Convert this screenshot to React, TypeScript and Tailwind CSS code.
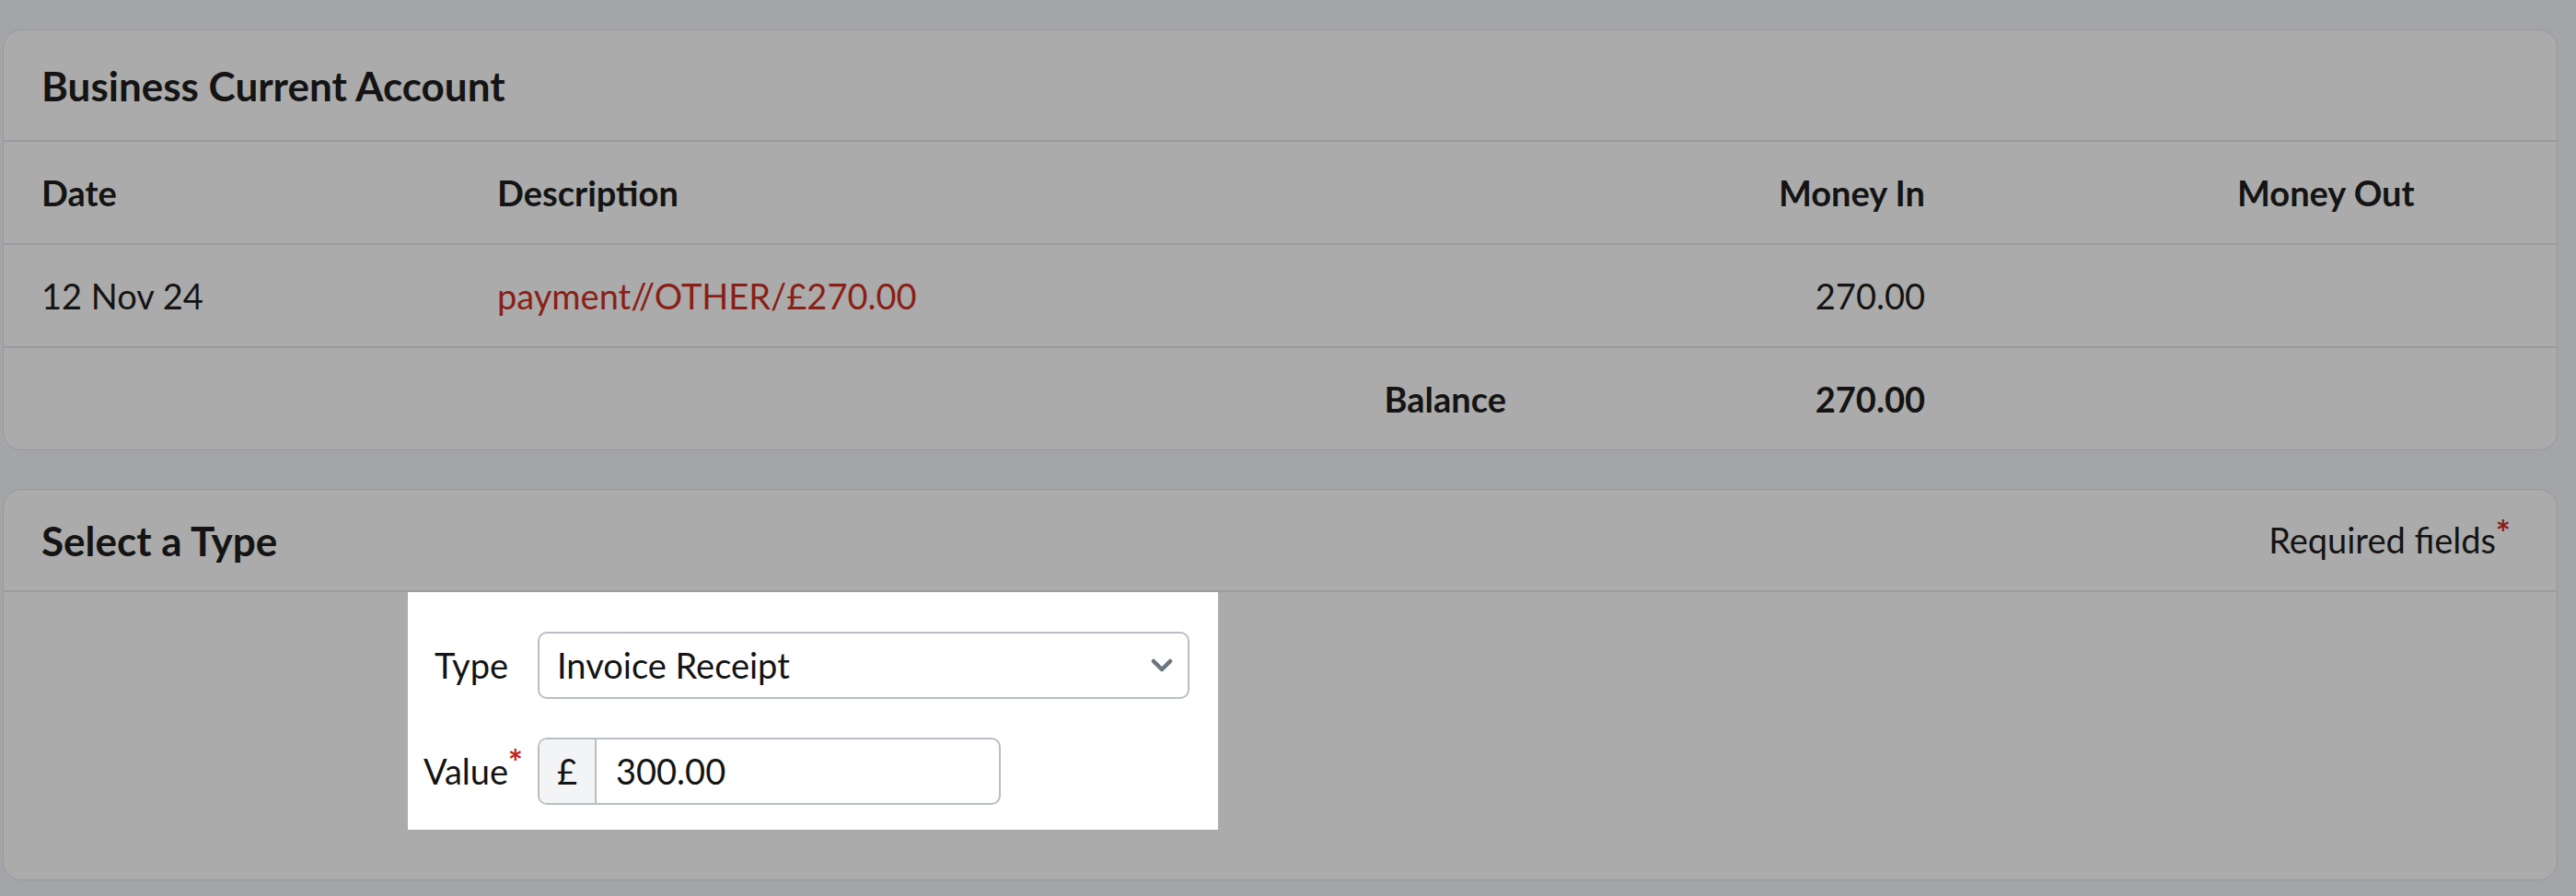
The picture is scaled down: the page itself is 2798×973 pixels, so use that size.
import React from "react";

const rowClass =
  "grid grid-cols-[494px_1180px_455px_1fr] items-center text-[38px] text-[#141414]";

export default function App() {
  return (
    <div
      className="min-h-screen bg-[#a3a5a9] pt-[32px] pl-[3px] pr-[20px] pb-[17px]"
      style={{ fontFamily: "Lato, 'Noto Sans', sans-serif" }}
    >
      <div className="rounded-[20px] border border-[#97989c] bg-[#ababab]">
        <div className="flex h-[121px] items-center border-b-2 border-[#9a9b9f] pl-[41px]">
          <h2 className="text-[44px] font-bold text-[#141414]">Business Current Account</h2>
        </div>
        <div className={rowClass + " h-[112px] border-b-2 border-[#9a9b9f] font-bold"}>
          <div className="pl-[41px]">Date</div>
          <div className="pl-[42px]">Description</div>
          <div className="pr-[42px] text-right">Money In</div>
          <div className="pl-[297px]">Money Out</div>
        </div>
        <div className={rowClass + " h-[112px] border-b-2 border-[#9a9b9f]"}>
          <div className="pl-[41px]">12 Nov 24</div>
          <div className="pl-[42px] text-[#8a1f17]">payment//OTHER/£270.00</div>
          <div className="pr-[42px] text-right">270.00</div>
          <div></div>
        </div>
        <div className={rowClass + " h-[110px] font-bold"}>
          <div></div>
          <div className="pr-[42px] text-right">Balance</div>
          <div className="pr-[42px] text-right">270.00</div>
          <div></div>
        </div>
      </div>

      <div className="mt-[42px] rounded-[20px] border border-[#97989c] bg-[#ababab]">
        <div className="flex h-[111px] items-center justify-between border-b-2 border-[#9a9b9f] pl-[41px] pr-[50px]">
          <h2 className="text-[44px] font-bold text-[#141414]">Select a Type</h2>
          <div className="relative pr-[16px] text-[38px] text-[#141414]">
            Required fields
            <span className="absolute right-0 -top-[8px] text-[38px] font-bold text-[#8a1f17]">*</span>
          </div>
        </div>
        <div className="pl-[439px] pb-[54px]">
          <div className="w-[880px] bg-white pt-[43px] pb-[27px] pr-[31px]">
            <div className="flex items-center">
              <label className="w-[125px] pr-[16px] text-right text-[38px] text-[#141414]">Type</label>
              <div className="ml-[16px] flex h-[73px] flex-1 items-center justify-between rounded-[10px] border-2 border-[#b8bec3] bg-white pl-[19px] pr-[15px] text-[38px] text-[#141414]">
                <span>Invoice Receipt</span>
                <svg width="26" height="18" viewBox="0 0 26 18" fill="none">
                  <path d="M4 4l9 9 9-9" stroke="#6b7680" strokeWidth="4.5" strokeLinecap="round" strokeLinejoin="round" />
                </svg>
              </div>
            </div>
            <div className="mt-[42px] flex items-center">
              <label className="relative w-[125px] pr-[16px] text-right text-[38px] text-[#141414]">
                Value
                <span className="absolute right-0 -top-[10px] text-[38px] font-bold text-[#c4221b]">*</span>
              </label>
              <div className="ml-[16px] flex h-[73px] w-[503px] overflow-hidden rounded-[10px] border-2 border-[#b8bec3] text-[38px] text-[#141414]">
                <div className="flex w-[62px] items-center justify-center border-r-2 border-[#b8bec3] bg-[#f3f4f6]">£</div>
                <div className="flex items-center pl-[21px]">300.00</div>
              </div>
            </div>
          </div>
        </div>
      </div>
    </div>
  );
}
